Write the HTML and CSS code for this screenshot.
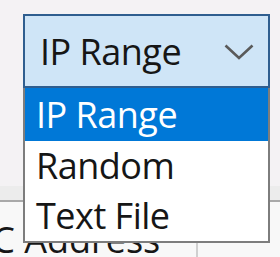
FILE: index.html
```html
<!DOCTYPE html>
<html>
<head>
<meta charset="utf-8">
<link rel="stylesheet" href="styles.css">
</head>
<body>
<div class="page">
  <div class="top">
    <div class="combo">
      <span class="combo-text">IP Range</span>
      <svg class="chev" width="30" height="16" viewBox="0 0 30 16"><path d="M1.5 1.5 L15 14 L28.5 1.5" fill="none" stroke="#5a5a5a" stroke-width="2.6"/></svg>
    </div>
  </div>
  <div class="table">
    <div class="thead-top"></div>
    <div class="thead">
      <div class="cell first"><span class="hdr">MAC Address</span></div>
      <div class="cell second"></div>
    </div>
  </div>
  <ul class="list">
    <li class="item sel">IP Range</li>
    <li class="item">Random</li>
    <li class="item">Text File</li>
  </ul>
</div>
</body>
</html>
```
FILE: styles.css
```css
html, body {
  margin: 0;
  padding: 0;
  width: 280px;
  height: 257px;
  overflow: hidden;
  background: #f4f2f4;
  font-family: "Open Sans", "Noto Sans", "DejaVu Sans", sans-serif;
}
.page {
  position: relative;
  width: 280px;
  height: 257px;
}
.top {
  height: 186px;
  padding: 14px 0 0 23px;
  box-sizing: border-box;
  border-bottom: 0;
}
.combo {
  width: 247px;
  height: 74px;
  box-sizing: border-box;
  border: 2px solid #2f5e8f;
  background: #cfe5f7;
  display: flex;
  align-items: center;
  justify-content: space-between;
  padding: 0 14px 0 15px;
}
.combo-text {
  font-size: 36px;
  color: #161616;
  line-height: 1;
  letter-spacing: -0.5px;
  margin-top: 2px;
}
.chev {
  display: block;
  margin-top: 2px;
}
.table {
  height: 71px;
}
.thead-top {
  height: 14px;
  background: #ececec;
  border-bottom: 2px solid #a9a9a9;
}
.thead {
  display: flex;
  height: 55px;
  background: #f8f8f8;
  overflow: hidden;
}
.cell {
  box-sizing: border-box;
  height: 100%;
}
.first {
  width: 198px;
  border-right: 2px solid #d0d0d0;
  white-space: nowrap;
  overflow: hidden;
}
.hdr {
  display: block;
  font-size: 36px;
  color: #161616;
  line-height: 1;
  margin-left: -63px;
  margin-top: 20px;
}
.second {
  flex: 1;
}
.list {
  position: absolute;
  left: 23px;
  top: 88px;
  width: 247px;
  margin: 0;
  padding: 0;
  list-style: none;
  box-sizing: border-box;
  border: 2px solid #7d7d7d;
  border-top: 0;
  background: #ffffff;
  height: 155px;
}
.item {
  height: 50px;
  font-size: 36px;
  line-height: 50px;
  padding-left: 11px;
  color: #161616;
  letter-spacing: -0.5px;
  white-space: nowrap;
}
.item.sel {
  height: 53px;
  line-height: 53px;
  background: #0078d7;
  color: #ffffff;
}
```
